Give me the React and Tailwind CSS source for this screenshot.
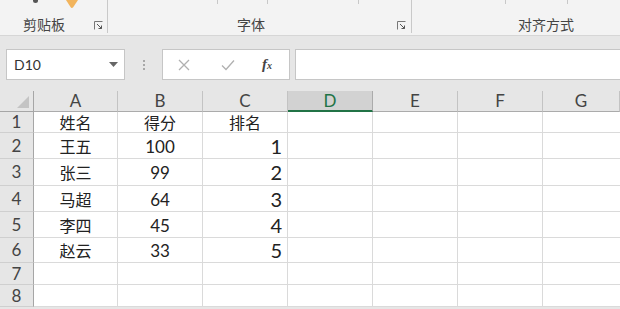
import React from "react";

const cjk = { fontFamily: '"Noto Sans CJK SC", "Noto Sans", sans-serif' };
const num = { fontFamily: 'Lato, "Liberation Sans", "Noto Sans CJK SC", sans-serif' };

function Launcher() {
  return (
    <svg width="9" height="9" viewBox="0 0 9 9" className="shrink-0 mb-[3px]">
      <path d="M0.5 8.5V0.5H8.5" fill="none" stroke="#777" strokeWidth="1" />
      <path d="M3 3L7.5 7.5M7.5 4.5V7.5H4.5" fill="none" stroke="#555" strokeWidth="1" />
    </svg>
  );
}

const rows = [
  { n: "1", a: "姓名", b: "得分", c: "排名", cHdr: true, h: "h-[21px]" },
  { n: "2", a: "王五", b: "100", c: "1", h: "h-[26px]" },
  { n: "3", a: "张三", b: "99", c: "2", h: "h-[27px]" },
  { n: "4", a: "马超", b: "64", c: "3", h: "h-[26px]" },
  { n: "5", a: "李四", b: "45", c: "4", h: "h-[26px]" },
  { n: "6", a: "赵云", b: "33", c: "5", h: "h-[25px]" },
  { n: "7", a: "", b: "", c: "", h: "h-[22px]" },
  { n: "8", a: "", b: "", c: "", h: "h-[22px]" },
];

const cols = ["A", "B", "C", "D", "E", "F", "G"];

export default function App() {
  return (
    <div className="w-[620px] h-[309px] overflow-hidden bg-[#e6e6e6] relative">
      {/* Ribbon */}
      <div className="h-[36px] bg-[#f3f3f3] border-b border-[#d6d6d6] flex relative">
        {/* icon fragments */}
        <div className="absolute left-[33px] top-0 w-[5px] h-[3px] bg-[#555] rounded-b-full" />
        <svg width="12" height="8" viewBox="0 0 12 8" className="absolute left-[66px] top-0">
          <path d="M0 0H12L7 7.5Q5.5 8.5 4.5 7Z" fill="#f2b45c" />
        </svg>
        <div className="absolute left-[217px] top-0 w-px h-[4px] bg-[#c8c8c8]" />
        <div className="absolute left-[267px] top-0 w-px h-[4px] bg-[#c8c8c8]" />
        <div className="absolute left-[358px] top-0 w-px h-[4px] bg-[#c8c8c8]" />
        <div className="absolute left-[505px] top-0 w-px h-[4px] bg-[#c8c8c8]" />
        <div className="absolute left-[567px] top-0 w-px h-[4px] bg-[#c8c8c8]" />

        <div className="w-[108px] flex items-end pb-0 pl-[23px] pr-[4px] justify-between border-r border-[#c9c9c9] mb-[2px]">
          <span className="text-[14px] leading-[17px] text-[#444]" style={cjk}>剪贴板</span>
          <Launcher />
        </div>
        <div className="w-[304px] flex items-end pb-0 pr-[5px] border-r border-[#c9c9c9] mb-[2px]">
          <span className="text-[14px] leading-[17px] text-[#444] ml-[129px]" style={cjk}>字体</span>
          <span className="ml-auto flex"><Launcher /></span>
        </div>
        <div className="flex-1 flex items-end pb-[2px]">
          <span className="text-[14px] leading-[17px] text-[#444] ml-[106px]" style={cjk}>对齐方式</span>
        </div>
      </div>

      {/* Formula bar */}
      <div className="flex items-center h-[31px] mt-[13px]">
        <div className="ml-[6px] w-[119px] h-[31px] bg-white border border-[#c6c6c6] flex items-center pl-[7px] pr-[6px]">
          <span className="text-[14px] text-[#333]" style={num}>D10</span>
          <svg width="9" height="5" viewBox="0 0 9 5" className="ml-auto">
            <path d="M0 0H9L4.5 5Z" fill="#666" />
          </svg>
        </div>
        <div className="w-[37px] flex flex-col items-center gap-[2px]">
          <div className="w-[2px] h-[2px] bg-[#a8a8a8]" />
          <div className="w-[2px] h-[2px] bg-[#a8a8a8]" />
          <div className="w-[2px] h-[2px] bg-[#a8a8a8]" />
        </div>
        <div className="w-[128px] h-[31px] bg-white border border-[#c6c6c6] flex items-center">
          <svg width="12" height="12" viewBox="0 0 12 12" className="ml-[15px]">
            <path d="M1 1L11 11M11 1L1 11" stroke="#b0b0b0" strokeWidth="1.3" />
          </svg>
          <svg width="14" height="12" viewBox="0 0 14 12" className="ml-[31px]">
            <path d="M1 6.5L5 10.5L13 1.5" fill="none" stroke="#b0b0b0" strokeWidth="1.3" />
          </svg>
          <span className="ml-[27px] text-[15px] italic font-bold text-[#444]" style={{ fontFamily: '"Liberation Serif", serif' }}>
            f<span className="text-[10px]">x</span>
          </span>
        </div>
        <div className="ml-[5px] flex-1 h-[31px] bg-white border-y border-l border-[#c6c6c6]" />
      </div>

      {/* Grid */}
      <div className="mt-[11px] grid grid-cols-[34px_84px_85px_85px_85px_85px_85px_1fr] bg-white">
        {/* header row */}
        <div className="h-[21px] bg-[#e6e6e6] border-r border-b border-[#a6a6a6] relative">
          <svg width="12" height="12" viewBox="0 0 12 12" className="absolute right-[4px] bottom-[3px]">
            <path d="M12 0V12H0Z" fill="#c4c4c4" />
          </svg>
        </div>
        {cols.map((c) =>
          c === "D" ? (
            <div key={c} className="h-[21px] bg-[#d2d2d2] border-r border-[#ababab] border-b-2 border-b-[#217346] flex items-center justify-center text-[17px] text-[#217346]" style={num}>
              {c}
            </div>
          ) : (
            <div key={c} className="h-[21px] bg-[#e6e6e6] border-r border-b border-r-[#c3c3c3] border-b-[#ababab] flex items-center justify-center text-[17px] text-[#444]" style={num}>
              {c}
            </div>
          )
        )}

        {rows.map((r) => (
          <React.Fragment key={r.n}>
            <div className={`${r.h} bg-[#e6e6e6] border-r border-b border-r-[#a6a6a6] border-b-[#cfcfcf] flex items-center justify-center text-[17px] text-[#444]`} style={num}>
              {r.n}
            </div>
            <div className={`${r.h} border-r border-b border-[#dadada] flex items-center justify-center text-[16px] text-[#222]`} style={cjk}>
              {r.a}
            </div>
            <div className={`${r.h} border-r border-b border-[#dadada] flex items-center justify-center ${r.cHdr ? "text-[16px]" : "text-[17px] pt-[2px]"} text-[#222]`} style={r.cHdr ? cjk : num}>
              {r.b}
            </div>
            {r.cHdr ? (
              <div className={`${r.h} border-r border-b border-[#dadada] flex items-center justify-center text-[16px] text-[#222]`} style={cjk}>
                {r.c}
              </div>
            ) : (
              <div className={`${r.h} border-r border-b border-[#dadada] flex items-center justify-end pr-[5px] text-[20px] text-[#222]`} style={num}>
                {r.c}
              </div>
            )}
            <div className={`${r.h} border-r border-b border-[#dadada]`} />
            <div className={`${r.h} border-r border-b border-[#dadada]`} />
            <div className={`${r.h} border-r border-b border-[#dadada]`} />
            <div className={`${r.h} border-b border-[#dadada]`} />
          </React.Fragment>
        ))}
      </div>
    </div>
  );
}
